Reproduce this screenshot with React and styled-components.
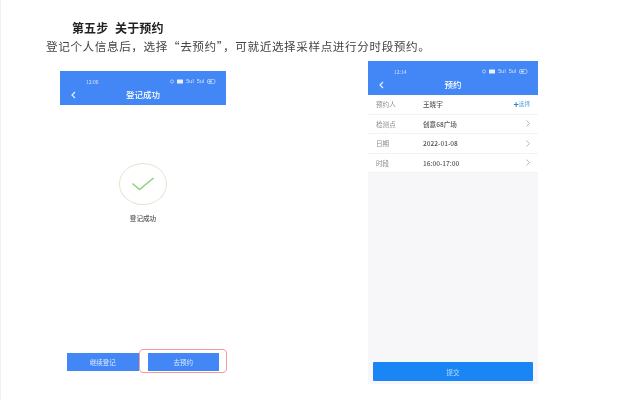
import React from "react";
import styled, { createGlobalStyle } from "styled-components";

const Global = createGlobalStyle`
  html, body { margin: 0; padding: 0; background: #fff; }
  body { font-family: "Noto Sans CJK SC", "Liberation Sans", sans-serif; }
`;

const Page = styled.div`
  width: 641px;
  height: 400px;
  box-sizing: border-box;
  overflow: hidden;
  padding-top: 20px;
  background: #fff;
  border-left: 1px solid #f1f1f1;
`;
const Heading = styled.h1`
  margin: 0 0 0 71px;
  font-size: 12px;
  line-height: 15px;
  font-weight: 700;
  color: #222;
  word-spacing: 4px;
  letter-spacing: 0.1px;
  filter: blur(0.25px);
`;
const Intro = styled.p`
  margin: 3px 0 0 45px;
  font-size: 11.6px;
  letter-spacing: 0.6px;
  line-height: 16px;
  color: #444;
  white-space: nowrap;
  filter: blur(0.3px);
`;
const Screens = styled.div`
  display: flex;
  align-items: flex-start;
  gap: 142px;
  margin-top: 7px;
  padding-left: 59px;
`;
const Phone = styled.section`
  display: flex;
  flex-direction: column;
  flex: none;
  box-sizing: border-box;
  width: ${(p) => p.$w}px;
  height: ${(p) => p.$h}px;
  margin-top: ${(p) => p.$top || 0}px;
  background: ${(p) => p.$bg || "#fff"};
  padding-bottom: ${(p) => p.$bottom || 0}px;
`;
const Header = styled.header`
  flex: none;
  box-sizing: border-box;
  height: 34px;
  background: #4287f5;
  color: #fff;
  padding: 5px 11px 0;
`;
const Status = styled.div`
  display: flex;
  align-items: center;
  justify-content: space-between;
  height: 10px;
  padding: 0 0 0 15px;
  font-size: 5px;
  color: #d5e4fd;
  filter: blur(0.2px);
`;
const StatusIcons = styled.span`
  display: flex;
  align-items: center;
  gap: 3px;
  margin-right: -1px;
  font-family: "Liberation Sans", sans-serif;
  font-size: 5.5px;
`;
const NavBar = styled.div`
  display: flex;
  align-items: center;
  justify-content: center;
  position: relative;
  height: 16px;
  font-size: 8.5px;
  font-weight: 500;
  filter: blur(0.2px);
`;
const Back = styled.svg`
  position: absolute;
  left: 0;
  top: 5px;
  width: 5px;
  height: 8px;
  fill: none;
  stroke: #e8f0ff;
  stroke-width: 1.2;
`;
const Result = styled.div`
  display: flex;
  flex-direction: column;
  align-items: center;
  margin-top: 58px;
`;
const Circle = styled.div`
  display: flex;
  align-items: center;
  justify-content: center;
  box-sizing: border-box;
  width: 48px;
  height: 42px;
  border: 1px solid #dbe8d2;
  border-radius: 50%;
`;
const Caption = styled.div`
  margin-top: 9px;
  font-size: 6.6px;
  line-height: 9px;
  font-weight: 500;
  color: #555;
  filter: blur(0.2px);
`;
const Actions = styled.div`
  display: flex;
  gap: 9px;
  margin-top: auto;
  padding: 0 7px;
`;
const Action = styled.div`
  position: relative;
  display: flex;
  align-items: center;
  justify-content: center;
  width: 72px;
  height: 18px;
  background: #4287f5;
  color: #dce9ff;
  font-size: 6.5px;
  filter: blur(0.15px);
  &::after {
    content: "";
    display: ${(p) => (p.$marked ? "block" : "none")};
    position: absolute;
    left: -9px;
    right: -8px;
    top: -4px;
    bottom: -2px;
    border: 1px solid #f79a9a;
    border-radius: 4px;
  }
`;
const Rows = styled.div`
  flex: none;
  background: #fff;
`;
const Row = styled.div`
  display: flex;
  align-items: center;
  box-sizing: border-box;
  height: 19.5px;
  padding: 0 8px;
  border-bottom: 1px solid #f3f3f5;
  font-size: 6.6px;
  filter: blur(0.2px);
`;
const Label = styled.span`
  width: 47px;
  color: #8c8c8c;
`;
const Value = styled.span`
  flex: 1;
  color: #555;
  font-weight: 500;
`;
const Pick = styled.span`
  color: #5aa0e0;
  font-size: 5.6px;
  display: flex;
  align-items: center;
`;
const Plus = styled.b`
  color: #2a86d8;
  font-size: 9px;
  line-height: 9px;
  font-weight: 700;
`;
const More = styled.svg`
  width: 4px;
  height: 7px;
  fill: none;
  stroke: #a8a8a8;
  stroke-width: 0.8;
`;
const Submit = styled.div`
  display: flex;
  align-items: center;
  justify-content: center;
  height: 19px;
  margin: auto 5px 0;
  border-radius: 1px;
  background: #1a86f5;
  color: #b9dcff;
  font-size: 6.5px;
  filter: blur(0.15px);
`;

function StatusBar({ time }) {
  return (
    <Status>
      <span>{time}</span>
      <StatusIcons>
        <svg width="13" height="5" viewBox="0 0 13 5">
          <circle cx="2" cy="2.5" r="1.6" fill="none" stroke="#cfe0fc" strokeWidth="0.7" />
          <rect x="7" y="0.5" width="6" height="4" rx="0.5" fill="#e8f0ff" />
        </svg>
        <span>5ul</span>
        <span>5ul</span>
        <svg width="9" height="5" viewBox="0 0 9 5">
          <rect x="0.4" y="0.4" width="7.6" height="4.2" rx="1.6" fill="none" stroke="#cfe0fc" strokeWidth="0.7" />
          <rect x="1.8" y="1.6" width="3" height="1.8" fill="#cfe0fc" />
        </svg>
      </StatusIcons>
    </Status>
  );
}

function TopBar({ time, title }) {
  return (
    <Header>
      <StatusBar time={time} />
      <NavBar>
        <Back viewBox="0 0 5 8">
          <path d="M4 1 L1 4 L4 7" />
        </Back>
        {title}
      </NavBar>
    </Header>
  );
}

function Chevron() {
  return (
    <More viewBox="0 0 4 7">
      <path d="M0.5 0.5 L3.5 3.5 L0.5 6.5" />
    </More>
  );
}

export default function App() {
  return (
    <Page>
      <Global />
      <Heading>第五步 关于预约</Heading>
      <Intro>登记个人信息后，选择“去预约”，可就近选择采样点进行分时段预约。</Intro>
      <Screens>
        <Phone $w={166} $h={307} $top={10} $bottom={7}>
          <TopBar time="12:06" title="登记成功" />
          <Result>
            <Circle>
              <svg width="24" height="16" viewBox="0 0 24 16">
                <path d="M1.5 7.5 L8.5 13.5 L22.5 2" fill="none" stroke="#8fd07e" strokeWidth="1.6" />
              </svg>
            </Circle>
            <Caption>登记成功</Caption>
          </Result>
          <Actions>
            <Action>继续登记</Action>
            <Action $marked>去预约</Action>
          </Actions>
        </Phone>
        <Phone $w={170} $h={323} $bg="#f7f7fa" $bottom={3}>
          <TopBar time="12:14" title="预约" />
          <Rows>
            <Row>
              <Label>预约人</Label>
              <Value>王晓宇</Value>
              <Pick><Plus>+</Plus>选择</Pick>
            </Row>
            <Row>
              <Label>检测点</Label>
              <Value>创意68广场</Value>
              <Chevron />
            </Row>
            <Row>
              <Label>日期</Label>
              <Value>2022-01-08</Value>
              <Chevron />
            </Row>
            <Row>
              <Label>时段</Label>
              <Value>16:00-17:00</Value>
              <Chevron />
            </Row>
          </Rows>
          <Submit>提交</Submit>
        </Phone>
      </Screens>
    </Page>
  );
}
